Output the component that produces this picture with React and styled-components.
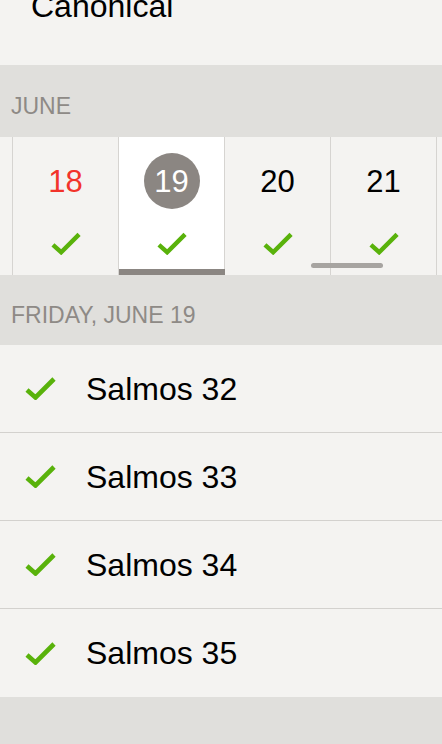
import React from "react";
import styled, { createGlobalStyle } from "styled-components";

const Global = createGlobalStyle`
  html, body { margin: 0; padding: 0; }
  body {
    background: #e0dfdc;
    font-family: "Liberation Sans", Arial, Helvetica, sans-serif;
    -webkit-font-smoothing: antialiased;
  }
  * { box-sizing: border-box; }
`;

const Page = styled.div`
  width: 442px;
  height: 744px;
  overflow: hidden;
  background: #e0dfdc;
  display: flex;
  flex-direction: column;
`;

const TopRow = styled.div`
  height: 65px;
  flex: none;
  background: #f4f3f1;
  padding-left: 31px;
  overflow: hidden;
`;

const TopLabel = styled.div`
  font-size: 32px;
  line-height: 32px;
  margin-top: -10px;
  color: #000;
`;

const SectionHeader = styled.div`
  height: ${(p) => p.$h}px;
  flex: none;
  background: #e0dfdc;
  color: #8e8a86;
  font-size: 23px;
  line-height: 26px;
  padding: ${(p) => p.$pt}px 0 0 11px;
  text-transform: uppercase;
`;

const Strip = styled.div`
  position: relative;
  height: 138px;
  flex: none;
  background: #f4f3f1;
  overflow: hidden;
`;

const StripTrack = styled.div`
  display: flex;
  height: 100%;
  margin-left: -93px;
`;

const DayCell = styled.div`
  position: relative;
  flex: none;
  width: 106px;
  height: 100%;
  border-right: 1px solid #d6d4d1;
  background: ${(p) => (p.$selected ? "#ffffff" : "transparent")};
  display: flex;
  flex-direction: column;
  align-items: center;
  padding-top: 16px;
`;

const DayNum = styled.div`
  width: 56px;
  height: 56px;
  border-radius: 50%;
  display: flex;
  align-items: center;
  justify-content: center;
  font-size: 31px;
  line-height: 1;
  padding-top: 1px;
  background: ${(p) => (p.$selected ? "#8b8682" : "transparent")};
  color: ${(p) => (p.$selected ? "#ffffff" : p.$red ? "#f2332a" : "#000000")};
`;

const DayCheck = styled.div`
  margin-top: 23px;
  width: 30px;
  height: 23px;
  display: flex;
`;

const SelectedBar = styled.div`
  position: absolute;
  left: 0;
  right: -1px;
  bottom: 0;
  height: 6px;
  background: #8b8682;
`;

const ScrollIndicator = styled.div`
  position: absolute;
  left: 311px;
  bottom: 7px;
  width: 72px;
  height: 5px;
  border-radius: 3px;
  background: #a7a4a1;
`;

const List = styled.div`
  display: flex;
  flex-direction: column;
  flex: none;
`;

const Row = styled.div`
  height: 88px;
  background: #f4f3f1;
  display: flex;
  align-items: center;
  padding-left: 25px;
  border-bottom: ${(p) => (p.$last ? "none" : "1px solid #d3d1ce")};
`;

const RowCheck = styled.div`
  width: 31px;
  height: 23px;
  display: flex;
  flex: none;
`;

const RowLabel = styled.div`
  margin-left: 30px;
  font-size: 32px;
  line-height: 1;
  color: #000;
`;

const Check = () => (
  <svg width="100%" height="100%" viewBox="0 0 31 23">
    <path
      d="M2 13 L10.5 20.5 L29 2"
      fill="none"
      stroke="#59b20b"
      strokeWidth="4.6"
      strokeLinejoin="miter"
      strokeLinecap="butt"
    />
  </svg>
);

const days = [
  { n: 17, edge: true },
  { n: 18, red: true },
  { n: 19, selected: true },
  { n: 20 },
  { n: 21 },
  { n: 22, edge: true },
];

const readings = ["Salmos 32", "Salmos 33", "Salmos 34", "Salmos 35"];

export default function App() {
  return (
    <>
      <Global />
      <Page>
        <TopRow>
          <TopLabel>Canonical</TopLabel>
        </TopRow>
        <SectionHeader $h={72} $pt={28}>June</SectionHeader>
        <Strip>
          <StripTrack>
            {days.map((d) =>
              d.edge ? (
                <DayCell key={d.n} />
              ) : (
                <DayCell key={d.n} $selected={d.selected}>
                  <DayNum $selected={d.selected} $red={d.red}>
                    {d.n}
                  </DayNum>
                  <DayCheck>
                    <Check />
                  </DayCheck>
                  {d.selected && <SelectedBar />}
                </DayCell>
              )
            )}
          </StripTrack>
          <ScrollIndicator />
        </Strip>
        <SectionHeader $h={70} $pt={27}>Friday, June 19</SectionHeader>
        <List>
          {readings.map((r, i) => (
            <Row key={r} $last={i === readings.length - 1}>
              <RowCheck>
                <Check />
              </RowCheck>
              <RowLabel>{r}</RowLabel>
            </Row>
          ))}
        </List>
      </Page>
    </>
  );
}
